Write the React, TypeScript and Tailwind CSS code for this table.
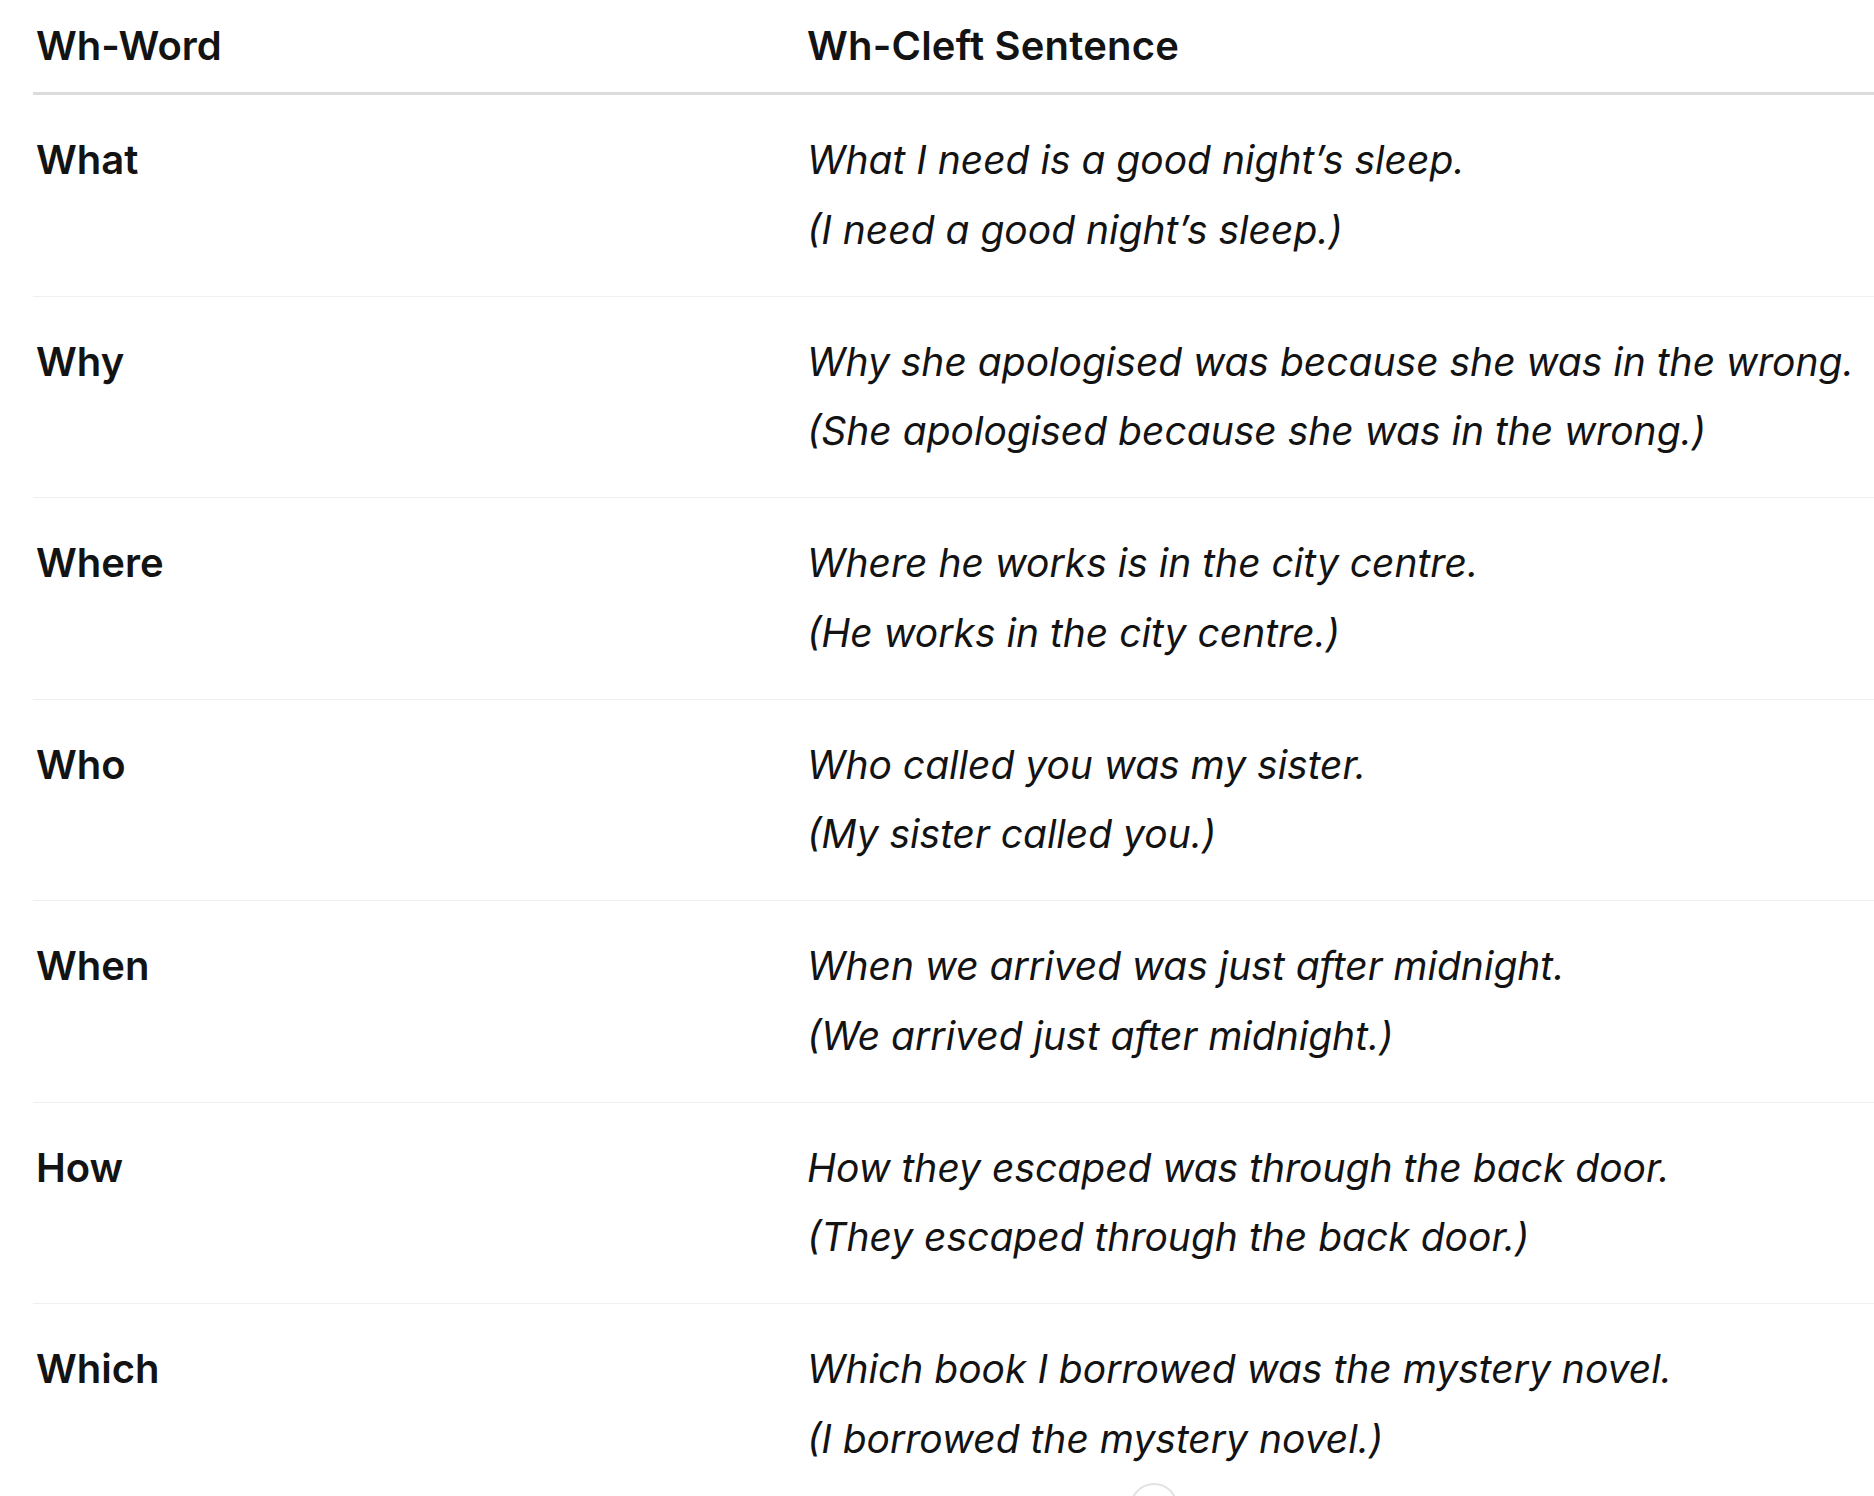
import React from "react";

const rows: { word: string; cleft: string; plain: string }[] = [
  { word: "What", cleft: "What I need is a good night’s sleep.", plain: "(I need a good night’s sleep.)" },
  { word: "Why", cleft: "Why she apologised was because she was in the wrong.", plain: "(She apologised because she was in the wrong.)" },
  { word: "Where", cleft: "Where he works is in the city centre.", plain: "(He works in the city centre.)" },
  { word: "Who", cleft: "Who called you was my sister.", plain: "(My sister called you.)" },
  { word: "When", cleft: "When we arrived was just after midnight.", plain: "(We arrived just after midnight.)" },
  { word: "How", cleft: "How they escaped was through the back door.", plain: "(They escaped through the back door.)" },
  { word: "Which", cleft: "Which book I borrowed was the mystery novel.", plain: "(I borrowed the mystery novel.)" },
];

export default function App() {
  return (
    <div
      className="relative w-[1874px] h-[1496px] overflow-hidden bg-white text-[#131313]"
      style={{ fontFamily: "Inter, 'Noto Sans', 'Liberation Sans', sans-serif" }}
    >
      <div className="pl-[33px]">
        <div className="flex h-[95px] items-center border-b-[3px] border-[#dcdcdc]">
          <div className="w-[774px] pl-[3px] text-[40px] font-semibold">Wh-Word</div>
          <div className="text-[40px] font-semibold tracking-[0.2px]">Wh-Cleft Sentence</div>
        </div>
        {rows.map((r) => (
          <div key={r.word} className="flex pt-[30px] pb-[31.5px] border-b border-[#efefef]">
            <div className="w-[774px] pl-[3px] leading-[69.5px] text-[40px] font-semibold">{r.word}</div>
            <div className="flex flex-col text-[39px] italic leading-[69.5px] whitespace-nowrap">
              <span>{r.cleft}</span>
              <span>{r.plain}</span>
            </div>
          </div>
        ))}
      </div>
      <div className="absolute left-[1130px] top-[1483px] h-[48px] w-[48px] rounded-full border-2 border-[#e2e2e2] bg-white" />
    </div>
  );
}
